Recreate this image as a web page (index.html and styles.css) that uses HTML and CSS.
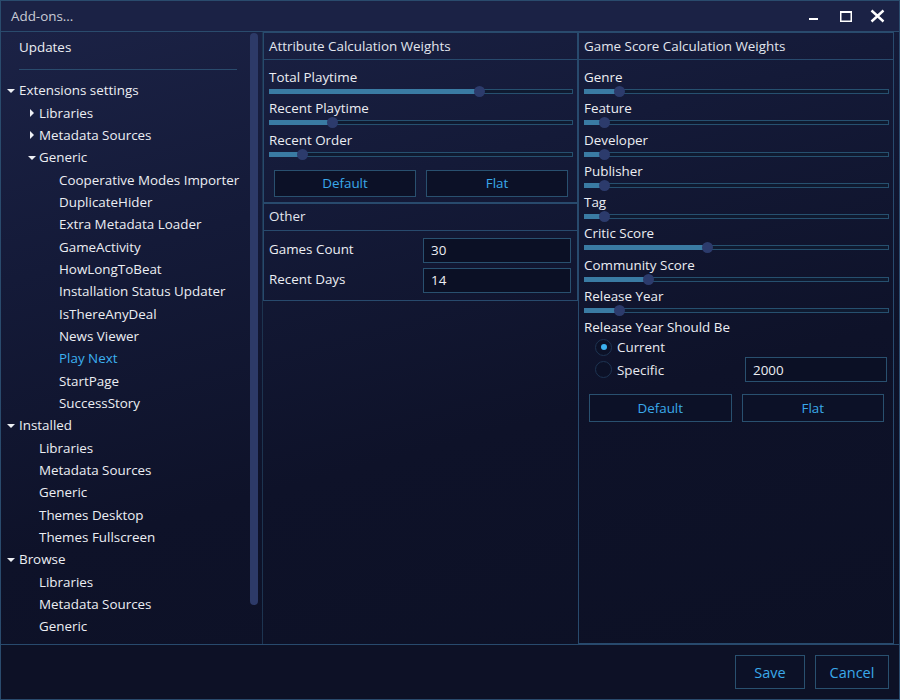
FILE: index.html
```html
<!DOCTYPE html>
<html>
<head>
<meta charset="utf-8">
<title>Add-ons...</title>
<link rel="stylesheet" href="styles.css">
</head>
<body>
<div class="window">
  <header class="titlebar">
    <span class="title">Add-ons...</span>
    <div class="controls">
      <svg class="ctl" width="16" height="20" viewBox="0 0 16 20"><rect x="2" y="12" width="9" height="2" fill="#fff"/></svg>
      <svg class="ctl" width="16" height="20" viewBox="0 0 16 20"><rect x="2.75" y="5.75" width="10.5" height="9.5" fill="none" stroke="#fff" stroke-width="1.5"/><rect x="2" y="5" width="12" height="2" fill="#fff"/></svg>
      <svg class="ctl" width="18" height="20" viewBox="0 0 18 20"><path d="M2.5 4.5 L14.5 15.5 M14.5 4.5 L2.5 15.5" stroke="#fff" stroke-width="2.4" fill="none"/></svg>
    </div>
  </header>
  <div class="main">
    <nav class="sidebar">
      <div class="tree">
        <div class="row l0"><span class="caret"></span>Updates</div>
        <div class="sep"></div>
        <div class="row l0"><span class="caret down"></span>Extensions settings</div>
        <div class="row l1"><span class="caret right"></span>Libraries</div>
        <div class="row l1"><span class="caret right"></span>Metadata Sources</div>
        <div class="row l1"><span class="caret down"></span>Generic</div>
        <div class="row l2"><span class="caret"></span>Cooperative Modes Importer</div>
        <div class="row l2"><span class="caret"></span>DuplicateHider</div>
        <div class="row l2"><span class="caret"></span>Extra Metadata Loader</div>
        <div class="row l2"><span class="caret"></span>GameActivity</div>
        <div class="row l2"><span class="caret"></span>HowLongToBeat</div>
        <div class="row l2"><span class="caret"></span>Installation Status Updater</div>
        <div class="row l2"><span class="caret"></span>IsThereAnyDeal</div>
        <div class="row l2"><span class="caret"></span>News Viewer</div>
        <div class="row l2 active"><span class="caret"></span>Play Next</div>
        <div class="row l2"><span class="caret"></span>StartPage</div>
        <div class="row l2"><span class="caret"></span>SuccessStory</div>
        <div class="row l0"><span class="caret down"></span>Installed</div>
        <div class="row l1"><span class="caret"></span>Libraries</div>
        <div class="row l1"><span class="caret"></span>Metadata Sources</div>
        <div class="row l1"><span class="caret"></span>Generic</div>
        <div class="row l1"><span class="caret"></span>Themes Desktop</div>
        <div class="row l1"><span class="caret"></span>Themes Fullscreen</div>
        <div class="row l0"><span class="caret down"></span>Browse</div>
        <div class="row l1"><span class="caret"></span>Libraries</div>
        <div class="row l1"><span class="caret"></span>Metadata Sources</div>
        <div class="row l1"><span class="caret"></span>Generic</div>
      </div>
      <div class="scrollbar"></div>
    </nav>

    <section class="col col-mid">
      <div class="group">
        <div class="group-head">Attribute Calculation Weights</div>
        <div class="group-body">
          <div class="field"><div class="label">Total Playtime</div><div class="slider"><div class="track"><div class="fill" style="width:69.3%"></div><div class="thumb" style="left:69.3%"></div></div></div></div>
          <div class="field"><div class="label">Recent Playtime</div><div class="slider"><div class="track"><div class="fill" style="width:20.8%"></div><div class="thumb" style="left:20.8%"></div></div></div></div>
          <div class="field"><div class="label">Recent Order</div><div class="slider"><div class="track"><div class="fill" style="width:10.9%"></div><div class="thumb" style="left:10.9%"></div></div></div></div>
          <div class="btn-row"><button class="btn">Default</button><button class="btn">Flat</button></div>
        </div>
      </div>
      <div class="group">
        <div class="group-head">Other</div>
        <div class="group-body form">
          <div class="form-row"><span class="label">Games Count</span><input class="input" value="30"></div>
          <div class="form-row"><span class="label">Recent Days</span><input class="input" value="14"></div>
        </div>
      </div>
    </section>

    <section class="col col-right">
      <div class="group fill-group">
        <div class="group-head">Game Score Calculation Weights</div>
        <div class="group-body">
          <div class="field"><div class="label">Genre</div><div class="slider"><div class="track"><div class="fill" style="width:11.5%"></div><div class="thumb" style="left:11.5%"></div></div></div></div>
          <div class="field"><div class="label">Feature</div><div class="slider"><div class="track"><div class="fill" style="width:6.6%"></div><div class="thumb" style="left:6.6%"></div></div></div></div>
          <div class="field"><div class="label">Developer</div><div class="slider"><div class="track"><div class="fill" style="width:6.6%"></div><div class="thumb" style="left:6.6%"></div></div></div></div>
          <div class="field"><div class="label">Publisher</div><div class="slider"><div class="track"><div class="fill" style="width:6.6%"></div><div class="thumb" style="left:6.6%"></div></div></div></div>
          <div class="field"><div class="label">Tag</div><div class="slider"><div class="track"><div class="fill" style="width:6.6%"></div><div class="thumb" style="left:6.6%"></div></div></div></div>
          <div class="field"><div class="label">Critic Score</div><div class="slider"><div class="track"><div class="fill" style="width:40.5%"></div><div class="thumb" style="left:40.5%"></div></div></div></div>
          <div class="field"><div class="label">Community Score</div><div class="slider"><div class="track"><div class="fill" style="width:21%"></div><div class="thumb" style="left:21%"></div></div></div></div>
          <div class="field"><div class="label">Release Year</div><div class="slider"><div class="track"><div class="fill" style="width:11.5%"></div><div class="thumb" style="left:11.5%"></div></div></div></div>
          <div class="label">Release Year Should Be</div>
          <div class="radio-row current"><span class="radio checked"></span><span class="radio-text">Current</span></div>
          <div class="radio-row specific"><span class="radio"></span><span class="radio-text">Specific</span><input class="input year" value="2000"></div>
          <div class="btn-row right-btns"><button class="btn">Default</button><button class="btn">Flat</button></div>
        </div>
      </div>
    </section>
  </div>
  <footer class="footer">
    <button class="btn foot save">Save</button>
    <button class="btn foot cancel">Cancel</button>
  </footer>
</div>
</body>
</html>
```

FILE: styles.css
```css
* { box-sizing: border-box; }
html, body { margin: 0; padding: 0; }
body {
  width: 900px; height: 700px;
  font-family: "Open Sans", "DejaVu Sans", sans-serif;
  font-size: 13.4px;
  color: #e8eaf0;
  background: #0d1127;
}
.window {
  width: 900px; height: 700px;
  border: 1px solid #2a4b6d;
  display: flex; flex-direction: column;
  background: linear-gradient(165deg, #1c2347 0%, #141a38 30%, #0e1229 60%, #0c1024 100%);
}
.titlebar {
  height: 31px;
  border-bottom: 1px solid #2a4b6d;
  display: flex; align-items: center;
  padding-left: 10px;
  background: #1b2245;
}
.title { color: #c9ccd6; font-size: 13.4px; }
.controls { margin-left: auto; display: flex; gap: 15px; padding-right: 12px; }
.ctl { display: block; }

.main { height: 612px; display: flex; }

.sidebar {
  width: 262px;
  border-right: 1px solid #1d3450;
  display: flex;
}
.tree { flex: 1; padding-top: 4px; }
.row {
  height: 22.33px;
  display: flex; align-items: center;
  white-space: nowrap;
  color: #eceef3;
}
.row.l0 { padding-left: 6px; }
.row.l1 { padding-left: 26px; }
.row.l2 { padding-left: 46px; }
.row.active { color: #3cb1f0; }
.caret { width: 12px; flex: none; display: flex; align-items: center; }
.caret.down::before {
  content: ""; display: block;
  border-left: 4px solid transparent; border-right: 4px solid transparent;
  border-top: 4px solid #eef0f4;
  margin-left: 0; margin-top: 1px;
}
.row.l1 .caret.down::before { margin-left: 1px; }
.caret.right::before {
  content: ""; display: block;
  border-top: 4px solid transparent; border-bottom: 4px solid transparent;
  border-left: 4px solid #eef0f4;
  margin-left: 3px;
}
.sep { height: 1px; background: #2a4b6d; margin: 11px 0 9px 18px; width: 218px; }
.scrollbar {
  width: 8px; height: 572px; margin: 1px 4px 0 0;
  background: #2d3a68; border-radius: 4px;
}

.col { display: flex; flex-direction: column; }
.col-mid { width: 315px; }
.col-right { width: 316px; margin-right: 5px; }

.group { border: 1px solid #284a6d; }
.fill-group { flex: 1; }
.group-head {
  height: 27px; border-bottom: 1px solid #284a6d;
  display: flex; align-items: center; padding-left: 5px; padding-bottom: 1px;
  color: #e2e6ee;
}
.group-body { padding: 9px 4px 5px 5px; }
.field { height: 31.3px; }
.label { height: 18px; line-height: 17px; color: #eceef3; white-space: nowrap; }
.slider { height: 13.3px; padding-top: 2px; }
.track {
  position: relative; height: 5px;
  border: 1px solid #26506f;
  background: #0f1a30;
}
.fill { background: #3a7ba3; margin: -1px 0 0 -1px; height: 5px; }
.thumb {
  position: absolute; top: -4px;
  width: 11px; height: 11px; margin-left: -5.5px;
  border-radius: 50%; background: #2c3b6c;
}
.btn-row {
  display: grid; grid-template-columns: 1fr 1fr; gap: 10px;
  margin-top: 7px; padding: 0 5px 0 5px;
}
.btn {
  height: 27px;
  border: 1px solid #29506f;
  background: #0c1127;
  color: #3aa9ea;
  font-family: inherit; font-size: 13.4px;
  padding: 0;
}
.form { padding: 7px 6px 7px 5px; display: flex; flex-direction: column; gap: 5px; }
.form-row { display: grid; grid-template-columns: 1fr 148px; align-items: center; }
.input {
  height: 25px; border: 1px solid #29506f;
  background: #0b1025; color: #eceef3;
  font-family: inherit; font-size: 13.4px;
  padding: 0 0 0 7px; outline: none; width: 100%;
}
.radio-row { display: flex; align-items: center; padding-left: 11px; }
.radio-row.current { height: 20px; }
.radio-row.specific { height: 25px; }
.radio {
  width: 17px; height: 17px; border-radius: 50%;
  border: 1px solid #1e3452; background: #0c1127;
  display: flex; align-items: center; justify-content: center;
  flex: none;
}
.radio.checked::before { content: ""; width: 6px; height: 6px; border-radius: 50%; background: #3cb1f0; }
.radio-text { margin-left: 5px; }
.input.year { width: 142px; margin-left: auto; margin-right: 2px; }
.right-btns { margin-top: 12px; }
.right-btns .btn { height: 28px; }

.footer {
  height: 55px; border-top: 1px solid #284a6d;
  display: flex; justify-content: flex-end; align-items: flex-start;
  gap: 10px; padding: 10px 10px 0 0;
  background: #0d1126;
}
.btn.foot { height: 34px; font-size: 14.5px; }
.save { width: 70px; }
.cancel { width: 74px; }
```
